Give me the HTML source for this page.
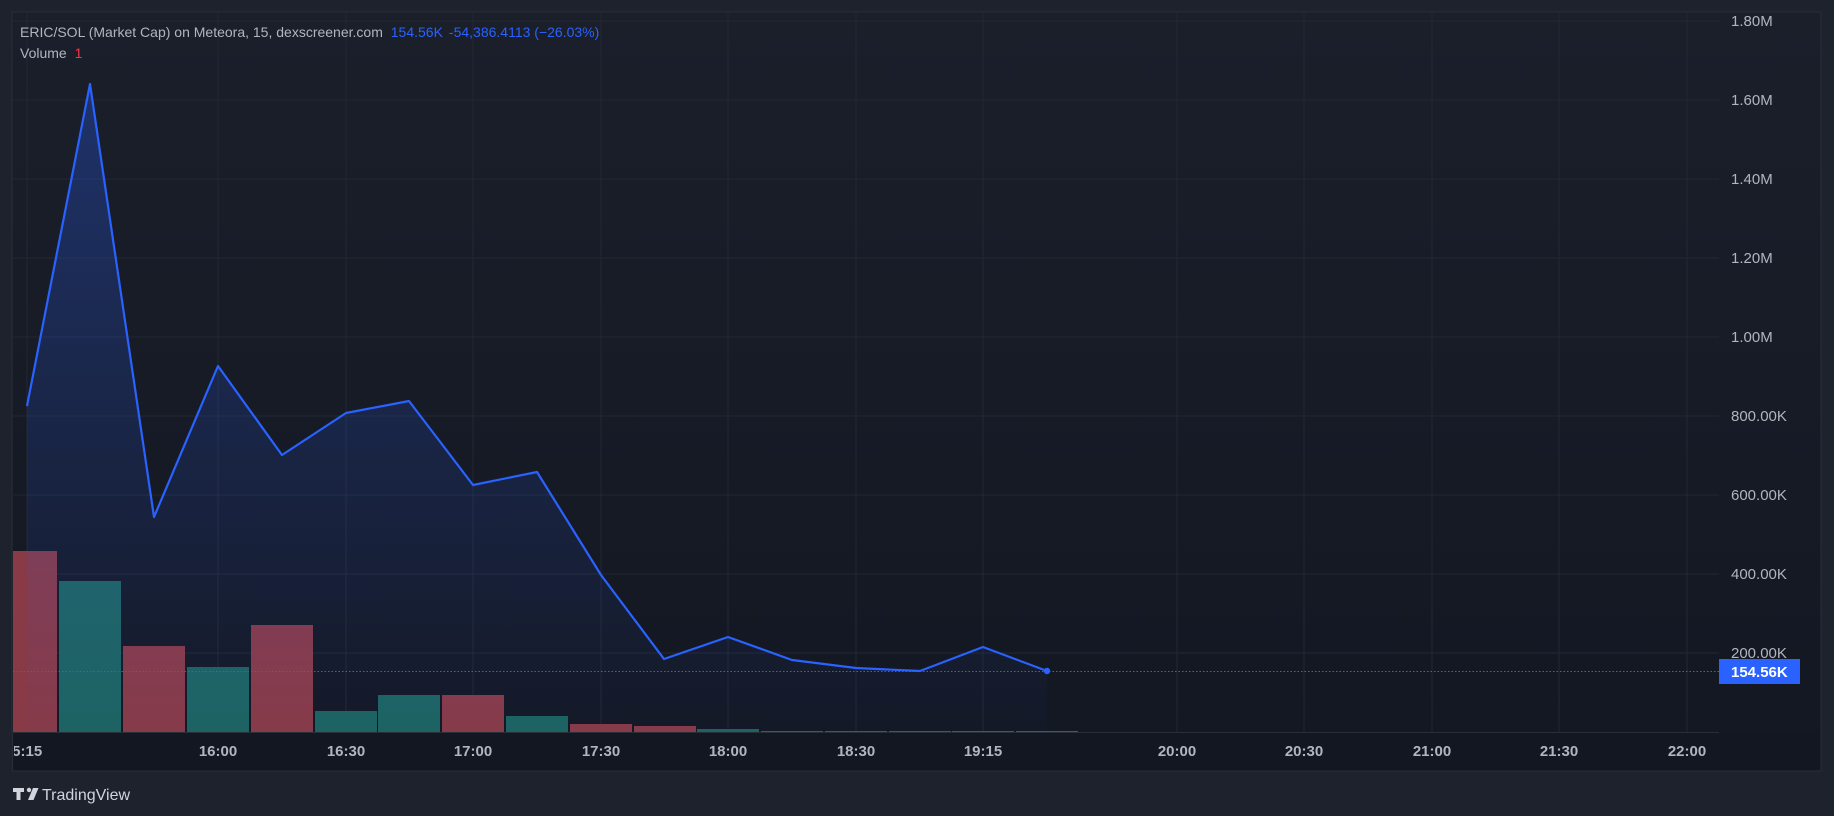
<!DOCTYPE html>
<html><head><meta charset="utf-8"><style>
html,body{margin:0;padding:0;background:#1e222d;width:1834px;height:816px;overflow:hidden;font-family:"Liberation Sans",sans-serif;}
svg{position:absolute;left:0;top:0}
</style></head><body>
<svg width="1834" height="816" viewBox="0 0 1834 816" xmlns="http://www.w3.org/2000/svg">
<defs>
<linearGradient id="bg" x1="0" y1="0" x2="0" y2="1"><stop offset="0" stop-color="#1b1f2a"/><stop offset="1" stop-color="#131722"/></linearGradient>
<linearGradient id="ar" x1="0" y1="84" x2="0" y2="732" gradientUnits="userSpaceOnUse"><stop offset="0" stop-color="#2962ff" stop-opacity="0.30"/><stop offset="1" stop-color="#2962ff" stop-opacity="0.02"/></linearGradient>
<clipPath id="cl"><rect x="14" y="733" width="1800" height="40"/></clipPath>
</defs>
<rect x="12" y="12" width="1809" height="759" fill="url(#bg)" stroke="#2a2e39" stroke-width="1"/>
<rect x="13" y="733" width="1807" height="37" fill="#131722"/>
<g stroke="#232734" stroke-width="1">
<line x1="13" y1="653" x2="1719" y2="653"/><line x1="13" y1="574" x2="1719" y2="574"/><line x1="13" y1="495" x2="1719" y2="495"/><line x1="13" y1="416" x2="1719" y2="416"/><line x1="13" y1="337" x2="1719" y2="337"/><line x1="13" y1="258" x2="1719" y2="258"/><line x1="13" y1="179" x2="1719" y2="179"/><line x1="13" y1="100" x2="1719" y2="100"/><line x1="13" y1="21" x2="1719" y2="21"/>
<line x1="27" y1="13" x2="27" y2="732"/><line x1="218" y1="13" x2="218" y2="732"/><line x1="346" y1="13" x2="346" y2="732"/><line x1="473" y1="13" x2="473" y2="732"/><line x1="601" y1="13" x2="601" y2="732"/><line x1="728" y1="13" x2="728" y2="732"/><line x1="856" y1="13" x2="856" y2="732"/><line x1="983" y1="13" x2="983" y2="732"/><line x1="1177" y1="13" x2="1177" y2="732"/><line x1="1304" y1="13" x2="1304" y2="732"/><line x1="1432" y1="13" x2="1432" y2="732"/><line x1="1559" y1="13" x2="1559" y2="732"/><line x1="1687" y1="13" x2="1687" y2="732"/>
</g>
<line x1="13" y1="732.5" x2="1719" y2="732.5" stroke="#2a2e39"/>
<g>
<rect x="13" y="551" width="44" height="181" fill="#883a46"/>
<rect x="59" y="581" width="62" height="151" fill="#1e6360"/>
<rect x="123" y="646" width="62" height="86" fill="#883a46"/>
<rect x="187" y="667" width="62" height="65" fill="#1e6360"/>
<rect x="251" y="625" width="62" height="107" fill="#883a46"/>
<rect x="315" y="711" width="62" height="21" fill="#1e6360"/>
<rect x="378" y="695" width="62" height="37" fill="#1e6360"/>
<rect x="442" y="695" width="62" height="37" fill="#883a46"/>
<rect x="506" y="716" width="62" height="16" fill="#1e6360"/>
<rect x="570" y="724" width="62" height="8" fill="#883a46"/>
<rect x="634" y="726" width="62" height="6" fill="#883a46"/>
<rect x="697" y="729" width="62" height="3" fill="#1e6360"/>
<rect x="761" y="731" width="62" height="1" fill="#883a46"/>
<rect x="825" y="731" width="62" height="1" fill="#883a46"/>
<rect x="889" y="731" width="62" height="1" fill="#883a46"/>
<rect x="952" y="731" width="62" height="1" fill="#883a46"/>
<rect x="1016" y="731" width="62" height="1" fill="#883a46"/>
</g>
<polygon fill="url(#ar)" points="27,406 90,84 154,517 218,366 282,455 346,413 409,401 473,485 537,472 601,575 664,659 728,637 792,660 856,668 920,671 983,647 1047,671 1047,732 27,732"/>
<line x1="13" y1="671.5" x2="1719" y2="671.5" stroke="#2962ff" stroke-width="1" stroke-dasharray="1.5 2"/>
<polyline fill="none" stroke="#2962ff" stroke-width="2.2" stroke-linejoin="round" points="27,406 90,84 154,517 218,366 282,455 346,413 409,401 473,485 537,472 601,575 664,659 728,637 792,660 856,668 920,671 983,647 1047,671"/>
<circle cx="1047" cy="671" r="3.2" fill="#2962ff"/>
<g fill="#b2b5be" font-size="15" font-family="Liberation Sans, sans-serif">
<text x="1731" y="26">1.80M</text><text x="1731" y="105">1.60M</text><text x="1731" y="184">1.40M</text><text x="1731" y="263">1.20M</text><text x="1731" y="342">1.00M</text><text x="1731" y="421">800.00K</text><text x="1731" y="500">600.00K</text><text x="1731" y="579">400.00K</text><text x="1731" y="658">200.00K</text>
</g>
<rect x="1719" y="659" width="81" height="25" fill="#2962ff"/>
<text x="1731" y="677" fill="#ffffff" font-size="15" font-weight="bold">154.56K</text>
<g fill="#b2b5be" font-size="15" font-weight="bold" text-anchor="middle" clip-path="url(#cl)">
<text x="23" y="756">15:15</text><text x="218" y="756">16:00</text><text x="346" y="756">16:30</text><text x="473" y="756">17:00</text><text x="601" y="756">17:30</text><text x="728" y="756">18:00</text><text x="856" y="756">18:30</text><text x="983" y="756">19:15</text><text x="1177" y="756">20:00</text><text x="1304" y="756">20:30</text><text x="1432" y="756">21:00</text><text x="1559" y="756">21:30</text><text x="1687" y="756">22:00</text>
</g>
<rect x="0" y="733" width="12" height="40" fill="#1e222d"/>
<line x1="12.5" y1="733" x2="12.5" y2="771" stroke="#2a2e39"/>
<text x="20" y="37" font-size="14" fill="#b2b5be">ERIC/SOL (Market Cap) on Meteora, 15, dexscreener.com <tspan fill="#2962ff" dx="4">154.56K</tspan><tspan fill="#2962ff" dx="6">-54,386.4113 (−26.03%)</tspan></text>
<text x="20" y="58" font-size="14" fill="#b2b5be">Volume <tspan fill="#f23645" dx="4">1</tspan></text>
<g fill="#d1d4dc">
<path d="M13 788 h11 v4 h-3.5 v8 h-4 v-8 h-3.5z"/>
<circle cx="29" cy="790" r="2.2"/>
<path d="M33 788 h5.5 l-5 12 h-5.5z"/>
</g>
<text x="42" y="800" font-size="16" fill="#d1d4dc">TradingView</text>
</svg>
</body></html>
